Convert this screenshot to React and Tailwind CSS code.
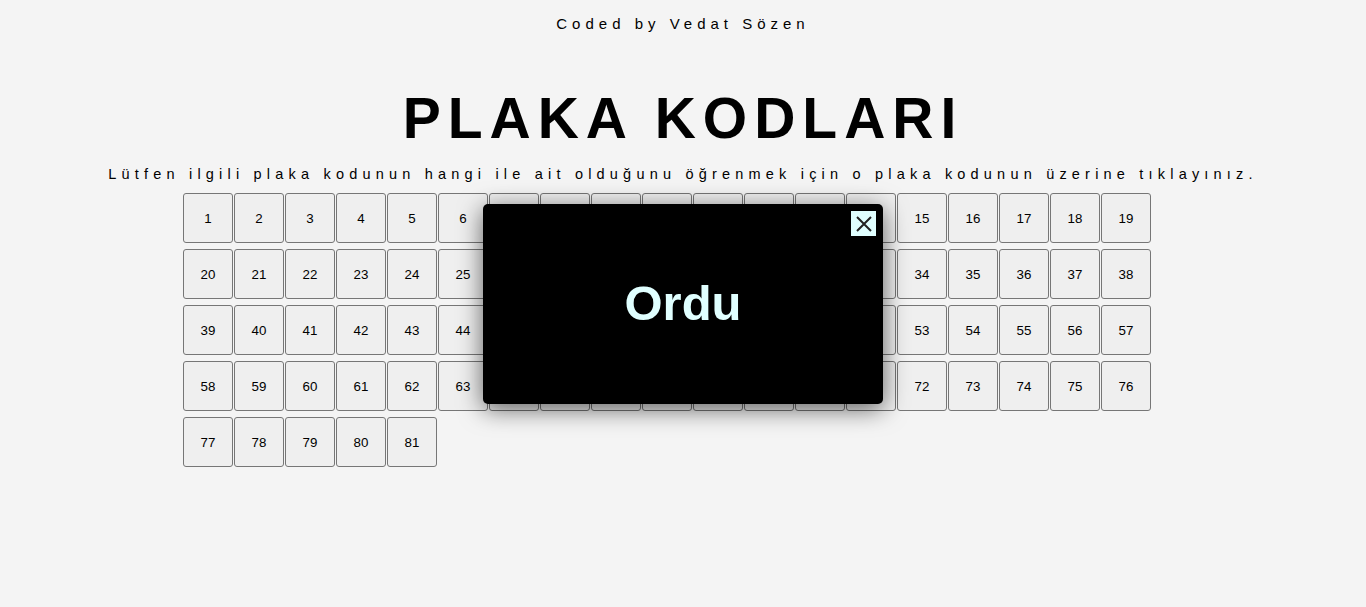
import React, { useState } from "react";

const ILLER = [
  "Adana", "Adıyaman", "Afyonkarahisar", "Ağrı", "Amasya", "Ankara", "Antalya", "Artvin", "Aydın", "Balıkesir",
  "Bilecik", "Bingöl", "Bitlis", "Bolu", "Burdur", "Bursa", "Çanakkale", "Çankırı", "Çorum", "Denizli",
  "Diyarbakır", "Edirne", "Elazığ", "Erzincan", "Erzurum", "Eskişehir", "Gaziantep", "Giresun", "Gümüşhane", "Hakkari",
  "Hatay", "Isparta", "Mersin", "İstanbul", "İzmir", "Kars", "Kastamonu", "Kayseri", "Kırklareli", "Kırşehir",
  "Kocaeli", "Konya", "Kütahya", "Malatya", "Manisa", "Kahramanmaraş", "Mardin", "Muğla", "Muş", "Nevşehir",
  "Niğde", "Ordu", "Rize", "Sakarya", "Samsun", "Siirt", "Sinop", "Sivas", "Tekirdağ", "Tokat",
  "Trabzon", "Tunceli", "Şanlıurfa", "Uşak", "Van", "Yozgat", "Zonguldak", "Aksaray", "Bayburt", "Karaman",
  "Kırıkkale", "Batman", "Şırnak", "Bartın", "Ardahan", "Iğdır", "Yalova", "Karabük", "Kilis", "Osmaniye", "Düzce",
];

export default function App() {
  const [secili, setSecili] = useState(52);

  return (
    <div className="min-h-[607px] bg-[#f4f4f4] text-black font-['Liberation_Sans',Arial,sans-serif] relative">
      <p className="text-center text-[15px] tracking-[5px] pt-[15px] leading-[18px]">Coded by Vedat Sözen</p>

      <h1 className="text-center text-[57px] font-bold tracking-[7px] leading-none mt-[57px]">PLAKA KODLARI</h1>

      <p className="text-center text-[14.5px] tracking-[5.2px] mt-[19px] leading-[17px]">
        Lütfen ilgili plaka kodunun hangi ile ait olduğunu öğrenmek için o plaka kodunun üzerine tıklayınız.
      </p>

      <div className="w-[1000px] mx-auto mt-[10px] flex flex-wrap gap-x-[1px] gap-y-[6px]">
        {ILLER.map((il, i) => (
          <button
            key={il}
            onClick={() => setSecili(i + 1)}
            className="w-[50px] h-[50px] pt-[2px] bg-[#efefef] border border-[#767676] rounded-[3px] text-[13.33px] text-black"
          >
            {i + 1}
          </button>
        ))}
      </div>

      {/* MODAL */}
      {secili && (
        <div className="absolute left-[483px] top-[204px] w-[400px] h-[200px] bg-black rounded-[5px] shadow-[0_5px_25px_rgba(0,0,0,0.6)] flex items-center justify-center">
          <span className="text-[#e0ffff] text-[49px] font-bold">{ILLER[secili - 1]}</span>
          <button
            onClick={() => setSecili(null)}
            className="absolute right-[7px] top-[7px] w-[25px] h-[25px] bg-[#e0ffff] flex items-center justify-center"
          >
            <svg className="w-[20px] h-[20px]" viewBox="0 0 20 20" fill="none" stroke="#222" strokeWidth="2">
              <path d="M3 3L17 17M17 3L3 17" />
            </svg>
          </button>
        </div>
      )}
    </div>
  );
}
